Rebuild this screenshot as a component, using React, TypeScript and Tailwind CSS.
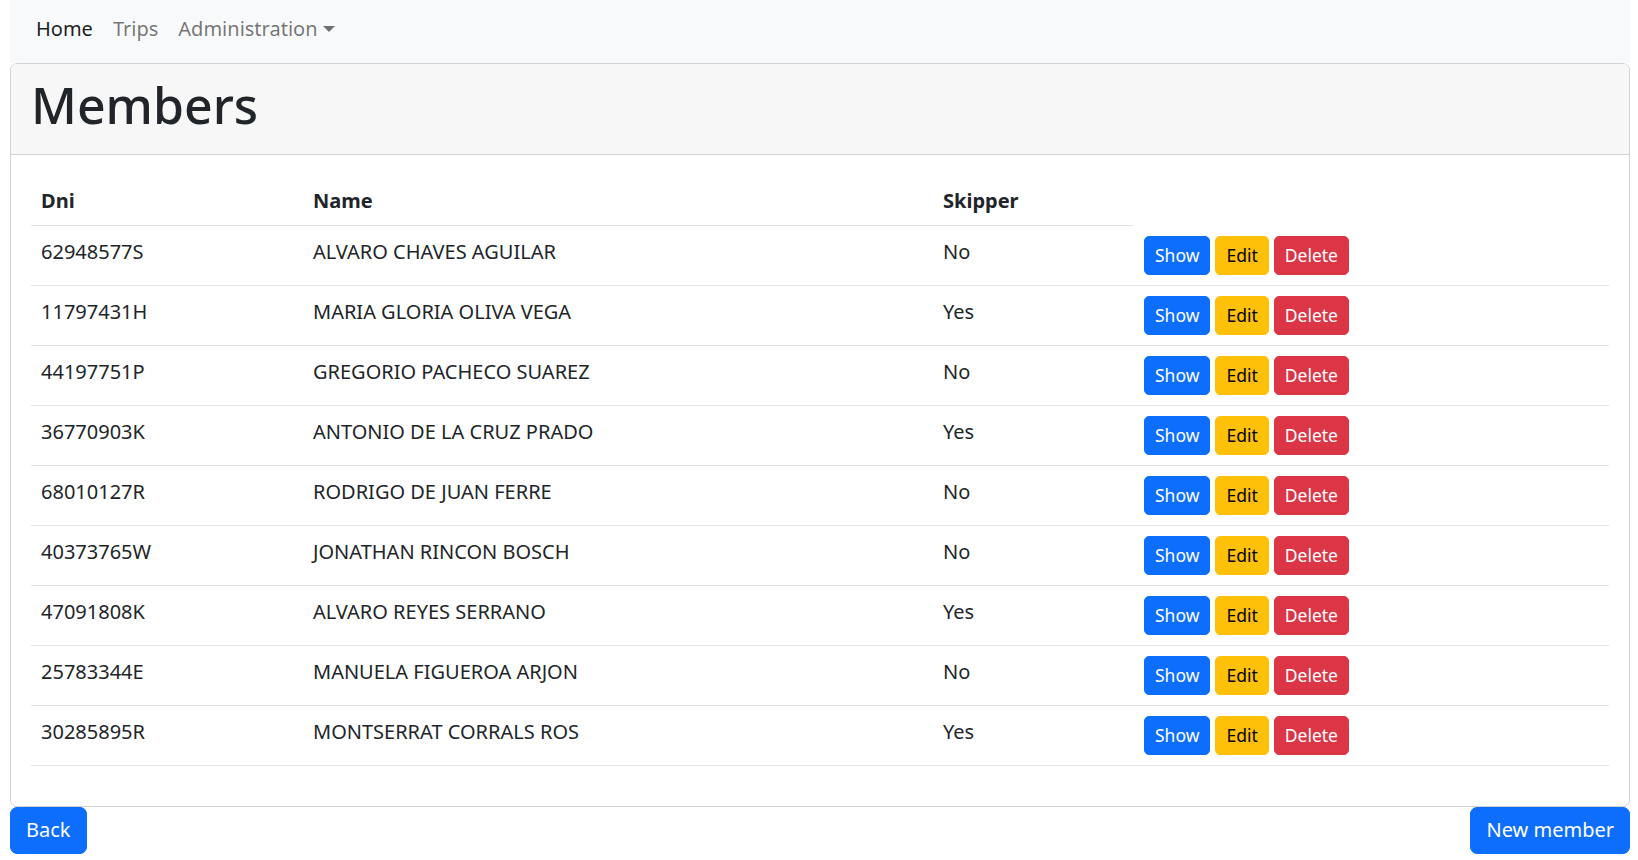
const members = [
  { dni: "62948577S", name: "ALVARO CHAVES AGUILAR", skipper: "No" },
  { dni: "11797431H", name: "MARIA GLORIA OLIVA VEGA", skipper: "Yes" },
  { dni: "44197751P", name: "GREGORIO PACHECO SUAREZ", skipper: "No" },
  { dni: "36770903K", name: "ANTONIO DE LA CRUZ PRADO", skipper: "Yes" },
  { dni: "68010127R", name: "RODRIGO DE JUAN FERRE", skipper: "No" },
  { dni: "40373765W", name: "JONATHAN RINCON BOSCH", skipper: "No" },
  { dni: "47091808K", name: "ALVARO REYES SERRANO", skipper: "Yes" },
  { dni: "25783344E", name: "MANUELA FIGUEROA ARJON", skipper: "No" },
  { dni: "30285895R", name: "MONTSERRAT CORRALS ROS", skipper: "Yes" },
];

export default function App() {
  return (
    <div className="min-h-screen bg-white pl-[10px] pr-[8px] text-[20px] leading-[30px] text-[#212529] font-['Noto_Sans',sans-serif]">
      {/* ===== NAVBAR ===== */}
      <nav className="h-[63px] bg-[#f8f9fa] pl-[16px] pt-[14px] flex items-start">
        <a className="px-[10px] text-[rgba(0,0,0,0.9)]">Home</a>
        <a className="px-[10px] text-[rgba(0,0,0,0.55)]">Trips</a>
        <a className="px-[10px] text-[rgba(0,0,0,0.55)] flex items-center">
          Administration
          <span className="ml-[5px] w-0 h-0 border-t-[6px] border-t-current border-x-[6px] border-x-transparent" />
        </a>
      </nav>

      {/* ===== CARD ===== */}
      <div className="border border-[#d3d3d3] rounded-[7px] overflow-hidden">
        <div className="bg-[#f7f7f7] border-b border-[#d3d3d3] px-[20px] pt-[11px] pb-[9px]">
          <h1 className="text-[50px] leading-[60px] font-medium mb-[10px]">Members</h1>
        </div>

        <div className="p-[20px]">
          <table className="w-full mb-[20px] border-collapse align-top">
            <colgroup>
              <col className="w-[272px]" />
              <col className="w-[630px]" />
              <col className="w-[200px]" />
              <col />
            </colgroup>
            <thead>
              <tr>
                <th className="text-left font-bold pt-[11px] pb-[9px] px-[10px] border-b border-[#dee2e6]">Dni</th>
                <th className="text-left font-bold pt-[11px] pb-[9px] px-[10px] border-b border-[#dee2e6]">Name</th>
                <th className="text-left font-bold pt-[11px] pb-[9px] px-[10px] border-b border-[#dee2e6]">Skipper</th>
              </tr>
            </thead>
            <tbody>
              {members.map((m) => (
                <tr key={m.dni} className="border-b border-[#dee2e6]">
                  <td className="pt-[11px] pb-[9px] px-[10px] align-top">{m.dni}</td>
                  <td className="pt-[11px] pb-[9px] px-[10px] align-top">{m.name}</td>
                  <td className="pt-[11px] pb-[9px] px-[10px] align-top">{m.skipper}</td>
                  <td className="pt-[10px] pb-[10px] pl-[11px] pr-[10px] align-top">
                    <div className="flex gap-[5px] text-[17.5px] leading-[27px]">
                      <button className="bg-[#0d6efd] text-white border border-[#0d6efd] rounded-[5px] px-[10px] py-[5px]">Show</button>
                      <button className="bg-[#ffc107] text-black border border-[#ffc107] rounded-[5px] px-[10px] py-[5px]">Edit</button>
                      <button className="bg-[#dc3545] text-white border border-[#dc3545] rounded-[5px] px-[10px] py-[5px]">Delete</button>
                    </div>
                  </td>
                </tr>
              ))}
            </tbody>
          </table>
        </div>
      </div>

      {/* ===== FOOTER BUTTONS ===== */}
      <div className="flex justify-between">
        <button className="bg-[#0d6efd] text-white border border-[#0d6efd] rounded-[7px] px-[15px] py-[7.5px]">Back</button>
        <button className="bg-[#0d6efd] text-white border border-[#0d6efd] rounded-[7px] px-[15px] py-[7.5px]">New member</button>
      </div>
    </div>
  );
}
